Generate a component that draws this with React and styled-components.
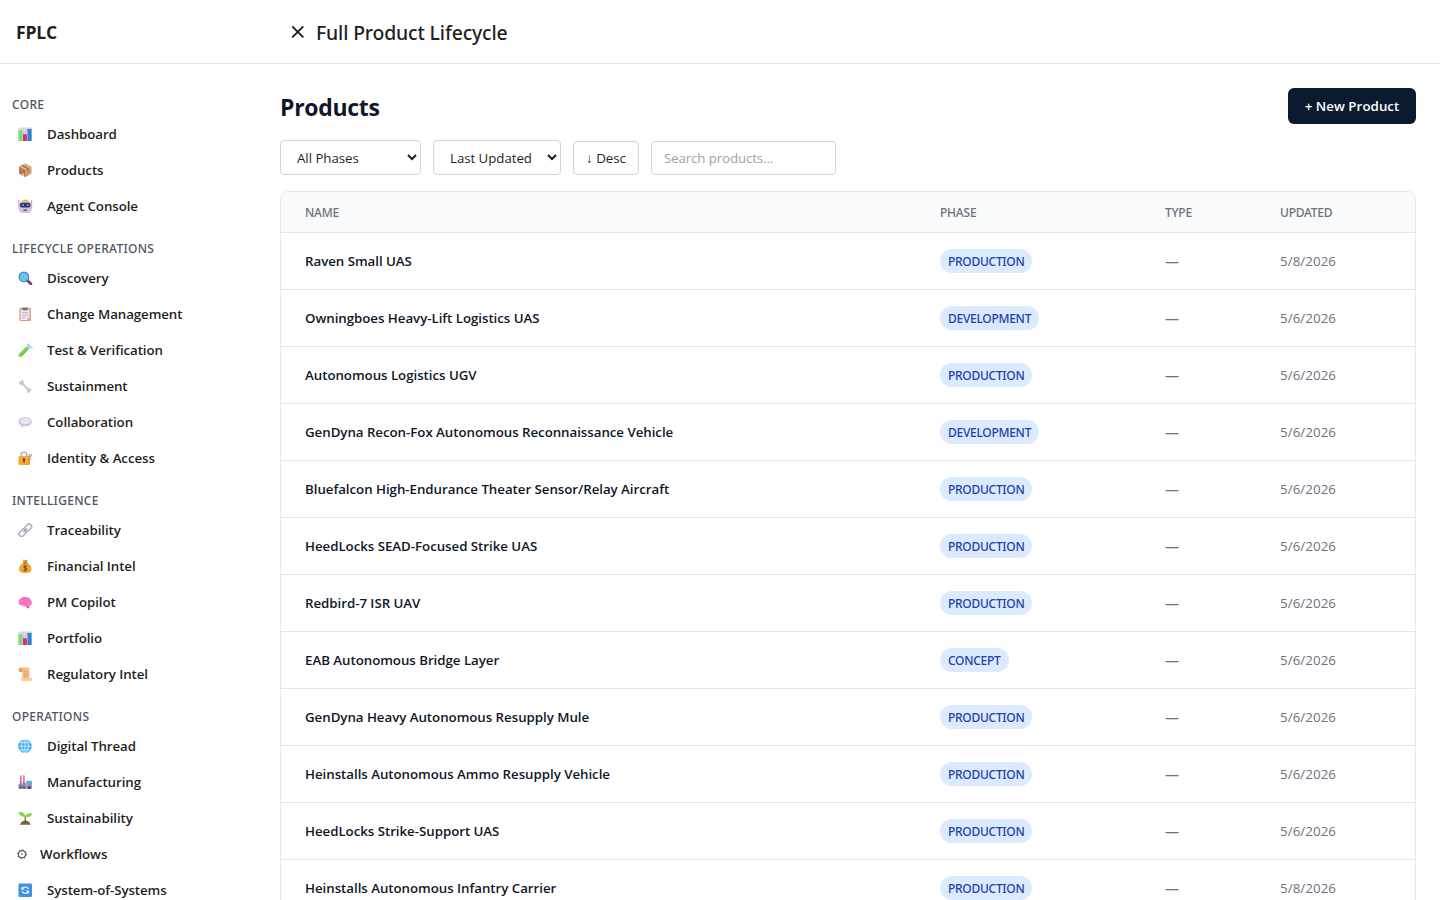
import styled, { createGlobalStyle } from "styled-components";

const labelFont = `"Segoe UI", "Noto Sans", sans-serif`;

const GlobalStyle = createGlobalStyle`
  * {
    box-sizing: border-box;
  }

  body {
    margin: 0;
    height: 900px;
    overflow: hidden;
    background: white;
    color: #1f1f1f;
    font-family: "Segoe UI", "Open Sans", "Noto Sans", sans-serif;
    font-size: 13.3px;
  }
`;

const Page = styled.div`
  display: flex;
  flex-direction: column;
  height: 900px;
  overflow: hidden;
`;

const Header = styled.header`
  display: flex;
  flex-shrink: 0;
  align-items: center;
  height: 64px;
  border-bottom: 1px solid #e5e7eb;
`;

const Brand = styled.div`
  width: 290px;
  padding: 1px 0 0 16px;
  font-size: 17.5px;
  font-weight: 700;
  letter-spacing: -0.2px;
`;

const CloseIcon = styled.svg`
  width: 16px;
  height: 16px;
  margin-right: 10px;
`;

const HeaderTitle = styled.div`
  padding-top: 2px;
  font-family: ${labelFont};
  font-size: 19.4px;
  font-weight: 500;
  letter-spacing: -0.15px;
`;

const Body = styled.div`
  display: flex;
  flex: 1;
  min-height: 0;
`;

const Sidebar = styled.nav`
  width: 256px;
  flex-shrink: 0;
  padding: 28px 12px 0;
  overflow: hidden;
`;

const Section = styled.div`
  margin-bottom: 12px;
`;

const SectionLabel = styled.div`
  height: 24px;
  line-height: 25px;
  color: #4b5563;
  font-family: ${labelFont};
  font-size: 12px;
  font-weight: 500;
  letter-spacing: 0.3px;
`;

const NavItem = styled.a`
  display: flex;
  align-items: center;
  gap: ${props => (props.$narrow ? "12px" : "14.5px")};
  height: 36px;
  padding: 0 0 1px ${props => (props.$narrow ? "4px" : "6px")};
  font-weight: 600;
  letter-spacing: -0.08px;
`;

const Glyph = styled.svg`
  width: ${props => (props.$narrow ? "12px" : "14.5px")};
  height: 14.5px;
  margin-top: 1px;
  flex-shrink: 0;
`;

const Main = styled.main`
  flex: 1;
  padding: 24px 24px 0;
`;

const TitleRow = styled.div`
  display: flex;
  align-items: center;
  justify-content: space-between;
  height: 36px;
  margin-bottom: 16px;
`;

const Title = styled.h1`
  margin: 0;
  padding-top: 2px;
  color: #0f172a;
  font-size: 23px;
  font-weight: 700;
  letter-spacing: -0.3px;
`;

const NewButton = styled.button`
  width: 128px;
  height: 36px;
  padding: 0 0 1px;
  border: 0;
  border-radius: 6px;
  background: #0a1b30;
  color: white;
  font-family: inherit;
  font-size: 13.3px;
  font-weight: 600;
  letter-spacing: 0.05px;
`;

const Filters = styled.div`
  display: flex;
  align-items: flex-end;
  gap: 12px;
  height: 35px;
  margin-bottom: 16px;
`;

const Select = styled.select`
  width: ${props => props.$width};
  height: 35px;
  padding: 1px 12px 0;
  border: 1px solid #d1d5db;
  border-radius: 4px;
  background: white;
  color: #1f1f1f;
  font-family: inherit;
  font-size: 13.3px;
  letter-spacing: -0.05px;
`;

const SortButton = styled.button`
  width: 66px;
  height: 34px;
  padding: 0;
  border: 1px solid #d1d5db;
  border-radius: 4px;
  background: white;
  color: #1f1f1f;
  font-family: inherit;
  font-size: 13.3px;
`;

const Search = styled.input`
  width: 185px;
  height: 34px;
  padding: 0 12px;
  border: 1px solid #d1d5db;
  border-radius: 4px;
  font-family: inherit;
  font-size: 13.3px;
  letter-spacing: -0.12px;

  &::placeholder {
    color: #9ca3af;
  }
`;

const TableCard = styled.div`
  border: 1px solid #e5e7eb;
  border-radius: 8px;
  overflow: hidden;
`;

const Table = styled.table`
  width: 100%;
  border-collapse: separate;
  border-spacing: 0;
  table-layout: fixed;
`;

const HeadCell = styled.th`
  width: ${props => props.$width};
  height: 41px;
  padding: 0 24px;
  border-bottom: 1px solid #e5e7eb;
  background: #f9fafb;
  color: #6b7280;
  font-family: ${labelFont};
  font-size: 12px;
  font-weight: 500;
  letter-spacing: -0.22px;
  text-align: left;
`;

const Cell = styled.td`
  height: 57px;
  padding: 0 24px;
  border-bottom: 1px solid #e5e7eb;
  color: #6b7280;
  letter-spacing: 0.08px;
`;

const TypeCell = styled(Cell)`
  padding-top: 1px;
  font-size: 14px;
`;

const NameCell = styled(Cell)`
  padding-bottom: 1px;
  color: #0f172a;
  font-weight: 600;
  letter-spacing: -0.04px;
`;

const Badge = styled.span`
  display: inline-block;
  height: 24px;
  padding: 0 8px;
  border-radius: 12px;
  background: #dbeafe;
  color: #1e40af;
  font-family: ${labelFont};
  font-size: 12px;
  font-weight: 500;
  line-height: 25px;
  letter-spacing: -0.28px;
  vertical-align: middle;
`;

const icons = {
  chart: (
    <>
      <rect x="1" y="1" width="14" height="14" rx="1" fill="#dcd5e8" />
      <path d="M1 5.5h14M1 10h14M5.5 1v14M10.2 1v14" stroke="#c4bad6" strokeWidth=".5" />
      <rect x="1" y="4" width="4" height="11" fill="#79dc6b" />
      <rect x="5.7" y="8" width="4" height="7" fill="#d5306b" />
      <rect x="10.4" y="2.5" width="4.1" height="12.5" fill="#2b83d8" />
    </>
  ),
  box: (
    <>
      <path d="M8 1l6.2 3.3v7L8 15l-6.3-3.7v-7z" fill="#c58a60" />
      <path d="M1.7 4.3L8 7.7V15l-6.3-3.7z" fill="#b87850" />
      <path d="M14.2 4.3L8 7.7V15l6.2-3.7z" fill="#d39b70" />
      <path d="M1.7 4.3L8 1l6.2 3.3L8 7.7z" fill="#e0b084" />
      <path d="M4.4 2.9l6.3 3.4v2.8" fill="none" stroke="#8d6049" strokeWidth="1.1" />
      <path d="M5 11l1.6 1v2L5 13z" fill="#f4e5e5" />
    </>
  ),
  robot: (
    <>
      <path d="M1.4 1.5v9M14.6 1.5v9" stroke="#f08aa8" strokeWidth="1.1" />
      <rect x="1.6" y="2.8" width="12.8" height="12.2" rx="3.5" fill="#d3c6e2" />
      <path d="M5.2 1.2h5.6v2.3H5.2z" fill="#f8b928" />
      <rect x="2.6" y="4.4" width="10.800" height="4.900" rx="2" fill="#25345e" />
      <circle cx="5.7" cy="6.800" r="1.200" fill="#48b4ed" />
      <circle cx="10.4" cy="6.800" r="1.200" fill="#48b4ed" />
      <path d="M6 12h4" stroke="#594072" strokeWidth="1.3" />
    </>
  ),
  search: (
    <>
      <path d="M10 10l3.7 3.7" stroke="#70417d" strokeWidth="3" strokeLinecap="round" />
      <circle cx="6.6" cy="6.6" r="5" fill="#62c8ed" stroke="#4a86b8" strokeWidth="1.2" />
    </>
  ),
  clipboard: (
    <>
      <rect x="2" y="1.3" width="11.8" height="13.7" rx="1" fill="#dc9a78" />
      <path d="M3.3 3h9v8.5L10 14H3.3z" fill="#f2eaf6" />
      <path d="M5.3 1h5v3h-5z" fill="#77717f" />
      <path d="M4.8 6.5h6M4.8 9h6M4.8 11.5h3" stroke="#a999b5" strokeWidth=".9" />
      <path d="M10 14v-2.5h2.3z" fill="#c9b3cf" />
    </>
  ),
  tube: (
    <>
      <path d="M3 13L12 4" stroke="#b9e0f5" strokeWidth="4" strokeLinecap="round" />
      <path d="M3 13l6.5-6.5" stroke="#86d748" strokeWidth="3.8" strokeLinecap="round" />
      <path d="M3.8 13.6l6-6" stroke="#5cae38" strokeWidth=".9" />
      <path d="M9.8 1.5L15 6.2" stroke="#9ed5f3" strokeWidth="1.5" strokeLinecap="round" />
    </>
  ),
  wrench: (
    <>
      <path d="M4.5 5l7.2 6.8" stroke="#cfc4da" strokeWidth="2.2" />
      <path d="M2.2 2.1L1.4 4a2.6 2.6 0 0 0 4.7 1.4A2.7 2.7 0 0 0 4 1.2l-.2 2.3-1.1.3zM14.7 11.8a2.5 2.5 0 1 0-2.4 3.5l.2-2 1-.6z" fill="#cbbfd6" />
    </>
  ),
  speech: (
    <>
      <path d="M8 2.8c4 0 6.8 1.8 6.8 4.6S12 12 8 12l-2 .1-2.4 1.6.3-2.4C2 10.5 1 9.3 1 7.4 1 4.6 4 2.8 8 2.8z" fill="#cfc0df" />
      <ellipse cx="8.2" cy="6.8" rx="5.6" ry="3.2" fill="#ece4f2" />
    </>
  ),
  lock: (
    <>
      <path d="M11.2 3.5H15V6l-1.2 1.2V10h-2z" fill="#c5b8d8" />
      <path d="M3.7 7V4.5a2.9 2.9 0 0 1 5.8 0V7" fill="none" stroke="#b3a9bb" strokeWidth="1.4" />
      <rect x="1" y="5.7" width="11.8" height="9.3" rx="1.2" fill="#f7a934" />
      <path d="M11 6.2h1.8v8.3H11z" fill="#f08a40" />
      <circle cx="6.7" cy="9.2" r="1.3" fill="#594047" />
      <path d="M6.7 9v3.7" stroke="#594047" strokeWidth="1.2" />
    </>
  ),
  link: (
    <g fill="none" stroke="#bdb1c9" strokeWidth="1.8">
      <rect x="6.4" y="2.8" width="8.6" height="5.2" rx="2.6" transform="rotate(-45 10.7 5.4)" />
      <rect x="1" y="8" width="8.6" height="5.2" rx="2.6" transform="rotate(-45 5.3 10.6)" />
      <path d="M6 10l4-4" stroke="#9f93ac" strokeWidth="1.2" />
    </g>
  ),
  money: (
    <>
      <path d="M5.3 1l2.7.8 2.7-.8-1.2 3h-3z" fill="#df9326" />
      <path d="M6 4.5h4c2.5 1.5 4.5 4 4.5 6.5s-2 4-6.5 4-6.5-1.5-6.5-4S3.5 6 6 4.5z" fill="#f3a72d" />
      <path d="M5.7 4.5h4.7" stroke="#7c5640" strokeWidth="1" />
      <path d="M9.8 8c-3-1.500-4.500 1-1.700 2s1.200 3.300-1.900 1.900M8 6.500v7" fill="none" stroke="#754a32" strokeWidth="1.1" />
    </>
  ),
  brain: (
    <>
      <path d="M8.5 11.5l3 .2 1 2.5c-2 .5-3-.5-4-2.7z" fill="#d84fb0" />
      <path d="M1.2 9c-.8-2.500.3-4.500 2.400-5.200C5.300 2 8 1.800 9.600 2.800c2-.3 3.600.9 4 2.500 1.600 1.500 1.700 4.400.2 5.700-1 1.200-2.700 1.600-4.300.9-1.500.8-3.400.6-4.400-.6-1.800.3-3.400-.7-3.900-2.300z" fill="#f77cc0" />
      <path d="M4 4c1.500 0 2.500.8 2.800 2M8.500 3c-.3 2 .5 3 2 3.200M3 8.500c2 .7 3.400.2 4-1M8 11c.2-2 1.800-2.500 3.300-1.800M12.500 6v2" fill="none" stroke="#e355b2" strokeWidth=".8" />
    </>
  ),
  scroll: (
    <>
      <path d="M3.5 1h8.8v12H5V5.5H1.5V3z" fill="#f6bd7c" />
      <path d="M1.3 2.5C1.3 1 4.8 1 4.8 3v2.5H1.3z" fill="#e09c63" />
      <path d="M4 12h11v1.3c0 1.2-.8 1.7-2 1.7H5c-1 0-1.500-.8-1-3z" fill="#f8cb92" />
      <path d="M6.3 5.5h4M6.3 7.8h4M6.3 10h4" stroke="#d99363" strokeWidth=".8" />
    </>
  ),
  globe: (
    <>
      <circle cx="7.7" cy="8" r="7.1" fill="#3fadeb" />
      <path d="M.8 8h13.8M2 4.3h11.4M2 11.7h11.4M7.7 1v14" stroke="#d7f1ff" strokeWidth=".9" />
      <ellipse cx="7.7" cy="8" rx="3.5" ry="6.8" fill="none" stroke="#d7f1ff" strokeWidth=".9" />
    </>
  ),
  factory: (
    <>
      <path d="M2.5 1h1.7v9H2.500zM5.700 1h1.700v9H5.700z" fill="#d84c82" />
      <path d="M2.5 2.7h1.7M2.5 5.6h1.7M5.7 2.7h1.7M5.7 5.6h1.7" stroke="#ead6ec" />
      <path d="M1 10l4-1.500V10l4-1.500V15H1z" fill="#978aa5" />
      <path d="M9 6.5h6V15H9z" fill="#a894bb" />
      <path d="M9.7 6.8h4.8v4H9.7z" fill="#48b9ef" />
      <path d="M2.3 12.5h2V14h-2zM5.7 12.5h2V14h-2zM10.7 12h2.8v3h-2.8z" fill="#554763" />
    </>
  ),
  seedling: (
    <>
      <path d="M8 11.5v-6" stroke="#56a62b" strokeWidth="1.5" />
      <path d="M8 6.2C5 6.8 1.5 5.5.8 1.5 4.5 1.1 7.7 2 8 6.2zM8 6.5c.5-3 3.4-4 7-3.5-.2 3-3.3 4.5-7 3.5z" fill="#81d643" />
      <path d="M2.5 14.8c1.3-3.200 3.300-4.500 5.600-4.500s4.500 1.300 5.300 4.500z" fill="#85584f" />
    </>
  ),
  gear: (
    <g fill="none" stroke="#1f1f1f" strokeWidth="1">
      <circle cx="6" cy="8" r="4.1" />
      <circle cx="6" cy="8" r="5" strokeWidth=".9" strokeDasharray="1.3 2.627" />
      <circle cx="6" cy="8" r=".8" fill="#1f1f1f" stroke="none" />
    </g>
  ),
  cycle: (
    <>
      <rect x="1" y="1" width="14" height="14" rx="1.5" fill="#418fe3" />
      <path d="M11.3 7C10.3 4.5 7 4 5 6M4.7 9c1 2.5 4.3 3 6.3 1" fill="none" stroke="#e6f2fc" strokeWidth="1.4" />
      <path d="M4 4v3.6h3.6zM12 12V8.4H8.4z" fill="#e6f2fc" />
    </>
  ),
};

const sections = [
  {
    label: "CORE",
    items: [
      ["chart", "Dashboard"],
      ["box", "Products"],
      ["robot", "Agent Console"],
    ],
  },
  {
    label: "LIFECYCLE OPERATIONS",
    items: [
      ["search", "Discovery"],
      ["clipboard", "Change Management"],
      ["tube", "Test & Verification"],
      ["wrench", "Sustainment"],
      ["speech", "Collaboration"],
      ["lock", "Identity & Access"],
    ],
  },
  {
    label: "INTELLIGENCE",
    items: [
      ["link", "Traceability"],
      ["money", "Financial Intel"],
      ["brain", "PM Copilot"],
      ["chart", "Portfolio"],
      ["scroll", "Regulatory Intel"],
    ],
  },
  {
    label: "OPERATIONS",
    items: [
      ["globe", "Digital Thread"],
      ["factory", "Manufacturing"],
      ["seedling", "Sustainability"],
      ["gear", "Workflows"],
      ["cycle", "System-of-Systems"],
    ],
  },
];

const products = [
  ["Raven Small UAS", "PRODUCTION", "5/8/2026"],
  ["Owningboes Heavy-Lift Logistics UAS", "DEVELOPMENT", "5/6/2026"],
  ["Autonomous Logistics UGV", "PRODUCTION", "5/6/2026"],
  ["GenDyna Recon-Fox Autonomous Reconnaissance Vehicle", "DEVELOPMENT", "5/6/2026"],
  ["Bluefalcon High-Endurance Theater Sensor/Relay Aircraft", "PRODUCTION", "5/6/2026"],
  ["HeedLocks SEAD-Focused Strike UAS", "PRODUCTION", "5/6/2026"],
  ["Redbird-7 ISR UAV", "PRODUCTION", "5/6/2026"],
  ["EAB Autonomous Bridge Layer", "CONCEPT", "5/6/2026"],
  ["GenDyna Heavy Autonomous Resupply Mule", "PRODUCTION", "5/6/2026"],
  ["Heinstalls Autonomous Ammo Resupply Vehicle", "PRODUCTION", "5/6/2026"],
  ["HeedLocks Strike-Support UAS", "PRODUCTION", "5/6/2026"],
  ["Heinstalls Autonomous Infantry Carrier", "PRODUCTION", "5/8/2026"],
];

function NavIcon({ name }) {
  const narrow = name === "gear";
  return (
    <Glyph $narrow={narrow} viewBox={narrow ? "0 0 12 16" : "0.5 0.5 15 15"}>
      {icons[name]}
    </Glyph>
  );
}

function ProductTable() {
  return (
    <TableCard>
      <Table>
        <thead>
          <tr>
            <HeadCell $width="635px">NAME</HeadCell>
            <HeadCell $width="225px">PHASE</HeadCell>
            <HeadCell $width="115px">TYPE</HeadCell>
            <HeadCell>UPDATED</HeadCell>
          </tr>
        </thead>
        <tbody>
          {products.map(([name, phase, updated]) => (
            <tr key={name}>
              <NameCell>{name}</NameCell>
              <Cell><Badge>{phase}</Badge></Cell>
              <TypeCell>—</TypeCell>
              <Cell>{updated}</Cell>
            </tr>
          ))}
        </tbody>
      </Table>
    </TableCard>
  );
}

export default function App() {
  return (
    <Page>
      <GlobalStyle />
      <Header>
        <Brand>FPLC</Brand>
        <CloseIcon viewBox="0 0 16 16">
          <path d="M2.3 2.3l11 11M13.3 2.3l-11 11" stroke="#1f1f1f" strokeWidth="1.9" />
        </CloseIcon>
        <HeaderTitle>Full Product Lifecycle</HeaderTitle>
      </Header>
      <Body>
        <Sidebar>
          {sections.map(({ label, items }) => (
            <Section key={label}>
              <SectionLabel>{label}</SectionLabel>
              {items.map(([icon, text]) => (
                <NavItem key={text} $narrow={icon === "gear"}>
                  <NavIcon name={icon} />
                  {text}
                </NavItem>
              ))}
            </Section>
          ))}
        </Sidebar>
        <Main>
          <TitleRow>
            <Title>Products</Title>
            <NewButton>+ New Product</NewButton>
          </TitleRow>
          <Filters>
            <Select $width="141px">
              <option>All Phases</option>
            </Select>
            <Select $width="128px">
              <option>Last Updated</option>
            </Select>
            <SortButton>↓ Desc</SortButton>
            <Search placeholder="Search products..." />
          </Filters>
          <ProductTable />
        </Main>
      </Body>
    </Page>
  );
}
